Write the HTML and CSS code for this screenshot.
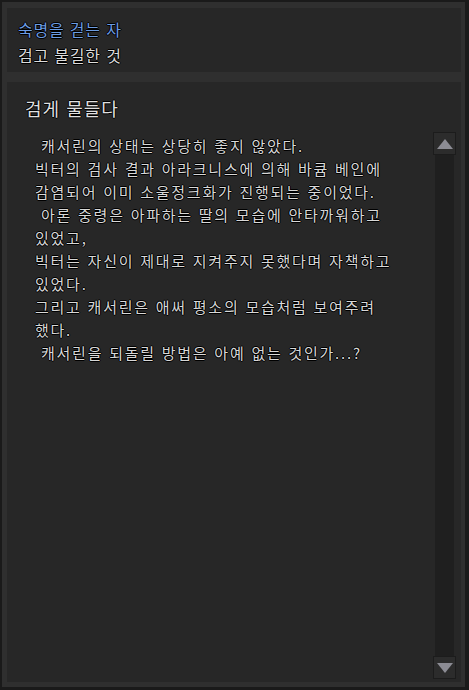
FILE: index.html
```html
<!DOCTYPE html>
<html lang="ko">
<head>
<meta charset="utf-8">
<link rel="stylesheet" href="styles.css">
</head>
<body>
<div class="frame">
  <section class="panel head">
    <div class="name">숙명을 걷는 자</div>
    <div class="sub">검고 불길한 것</div>
  </section>
  <section class="panel main">
    <h1 class="title">검게 물들다</h1>
    <div class="content">
      <div class="text"><span class="ind"></span>캐서린의 상태는 상당히 좋지 않았다.
빅터의 검사 결과 아라크니스에 의해 바큠 베인에
감염되어 이미 소울정크화가 진행되는 중이었다.
<span class="ind"></span>아론 중령은 아파하는 딸의 모습에 안타까워하고
있었고,
빅터는 자신이 제대로 지켜주지 못했다며 자책하고
있었다.
그리고 캐서린은 애써 평소의 모습처럼 보여주려
했다.
<span class="ind"></span>캐서린을 되돌릴 방법은 아예 없는 것인가...?</div>
      <div class="scroll">
        <div class="btn"><svg width="16" height="10" viewBox="0 0 16 10"><polygon points="8,0 16,10 0,10" fill="#8c8c94"/></svg></div>
        <div class="track"></div>
        <div class="btn"><svg width="16" height="10" viewBox="0 0 16 10"><polygon points="0,0 16,0 8,10" fill="#8c8c94"/></svg></div>
      </div>
    </div>
  </section>
</div>
</body>
</html>
```
FILE: styles.css
```css
html, body {
  margin: 0;
  padding: 0;
  background: #1a1a1a;
}
body {
  width: 469px;
  height: 690px;
  padding: 2px 4px 3px 2px;
  box-sizing: border-box;
  font-family: "Noto Sans CJK KR", "Noto Sans", sans-serif;
}
.frame {
  height: 100%;
  box-sizing: border-box;
  background: #2f2f2f;
  padding: 6px 4px 5px 5px;
  display: flex;
  flex-direction: column;
  gap: 10px;
}
.panel {
  background: #272727;
}
.head {
  height: 64px;
  box-sizing: border-box;
  padding: 8px 0 0 11px;
  font-size: 16px;
  line-height: 26px;
  letter-spacing: 0.8px;
  text-shadow: 1px 0 0 #000, -1px 0 0 #000, 0 1px 0 #000, 0 -1px 0 #000;
}
.name { color: #6c9ce2; }
.sub { color: #dcdcdc; }
.main {
  flex: 1;
  display: flex;
  flex-direction: column;
  min-height: 0;
}
.title {
  margin: 0;
  padding: 14px 0 0 18px;
  font-size: 18px;
  font-weight: normal;
  line-height: 24px;
  color: #e0e0e0;
  letter-spacing: 1px;
  text-shadow: 1px 0 0 #000, -1px 0 0 #000, 0 1px 0 #000, 0 -1px 0 #000;
}
.content {
  flex: 1;
  display: flex;
  margin-top: 12px;
  padding: 0 5px 3px 28px;
  min-height: 0;
}
.text {
  flex: 1;
  white-space: pre;
  padding-top: 2px;
  font-size: 15px;
  line-height: 23px;
  letter-spacing: 1.75px;
  color: #d8d8d8;
  text-shadow: 1px 0 0 #000, -1px 0 0 #000, 0 1px 0 #000, 0 -1px 0 #000;
}
.ind {
  display: inline-block;
  width: 6px;
}
.scroll {
  width: 23px;
  display: flex;
  flex-direction: column;
  align-items: center;
}
.btn {
  width: 23px;
  height: 23px;
  box-sizing: border-box;
  background: #2c2c2c;
  border: 1px solid #1c1c1c;
  display: flex;
  align-items: center;
  justify-content: center;
}
.track {
  flex: 1;
  width: 19px;
  background: #1f1f1f;
}
```
